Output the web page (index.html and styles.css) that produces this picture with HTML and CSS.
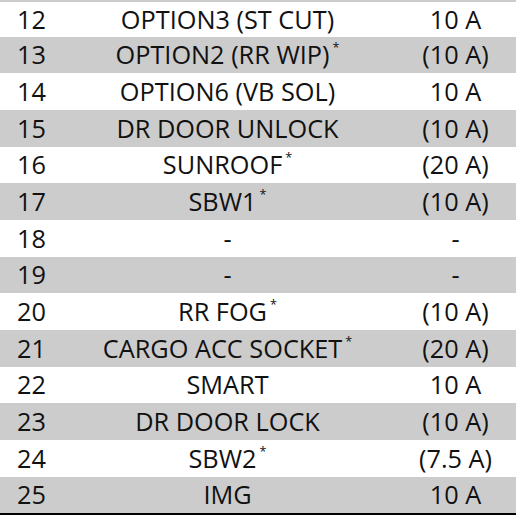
FILE: index.html
```html
<!DOCTYPE html>
<html>
<head>
<meta charset="utf-8">
<link rel="stylesheet" href="styles.css">
</head>
<body>
<div class="table">
  <div class="row"><div class="num">12</div><div class="name">OPTION3 (ST CUT)</div><div class="amp">10 A</div></div>
  <div class="row alt"><div class="num">13</div><div class="name">OPTION2 (RR WIP)<sup>*</sup></div><div class="amp">(10 A)</div></div>
  <div class="row"><div class="num">14</div><div class="name">OPTION6 (VB SOL)</div><div class="amp">10 A</div></div>
  <div class="row alt"><div class="num">15</div><div class="name">DR DOOR UNLOCK</div><div class="amp">(10 A)</div></div>
  <div class="row"><div class="num">16</div><div class="name">SUNROOF<sup>*</sup></div><div class="amp">(20 A)</div></div>
  <div class="row alt"><div class="num">17</div><div class="name">SBW1<sup>*</sup></div><div class="amp">(10 A)</div></div>
  <div class="row"><div class="num">18</div><div class="name">-</div><div class="amp">-</div></div>
  <div class="row alt"><div class="num">19</div><div class="name">-</div><div class="amp">-</div></div>
  <div class="row"><div class="num">20</div><div class="name">RR FOG<sup>*</sup></div><div class="amp">(10 A)</div></div>
  <div class="row alt"><div class="num">21</div><div class="name">CARGO ACC SOCKET<sup>*</sup></div><div class="amp">(20 A)</div></div>
  <div class="row"><div class="num">22</div><div class="name">SMART</div><div class="amp">10 A</div></div>
  <div class="row alt"><div class="num">23</div><div class="name">DR DOOR LOCK</div><div class="amp">(10 A)</div></div>
  <div class="row"><div class="num">24</div><div class="name">SBW2<sup>*</sup></div><div class="amp">(7.5 A)</div></div>
  <div class="row alt"><div class="num">25</div><div class="name">IMG</div><div class="amp">10 A</div></div>
</div>
</body>
</html>
```
FILE: styles.css
```css
html, body {
  margin: 0;
  padding: 0;
  background: #fff;
}
.table {
  width: 516px;
  font-family: "Open Sans", "Noto Sans", sans-serif;
  font-size: 25.3px;
  color: #111;
  border-bottom: 2px solid #000;
  display: grid;
  grid-auto-rows: 36.67px;
}
.row {
  display: grid;
  grid-template-columns: 60px 335px 121px;
  align-items: center;
  box-sizing: border-box;
  line-height: 1;
}
.row:first-child {
  border-top: 2px solid #cccccc;
}
.row.alt {
  background: #cccccc;
}
.num {
  padding-left: 17px;
}
.name, .amp {
  text-align: center;
  white-space: nowrap;
}
sup {
  font-size: 0.5em;
  vertical-align: top;
  line-height: 1;
  position: relative;
  top: -1px;
  margin-left: 3px;
}
```
